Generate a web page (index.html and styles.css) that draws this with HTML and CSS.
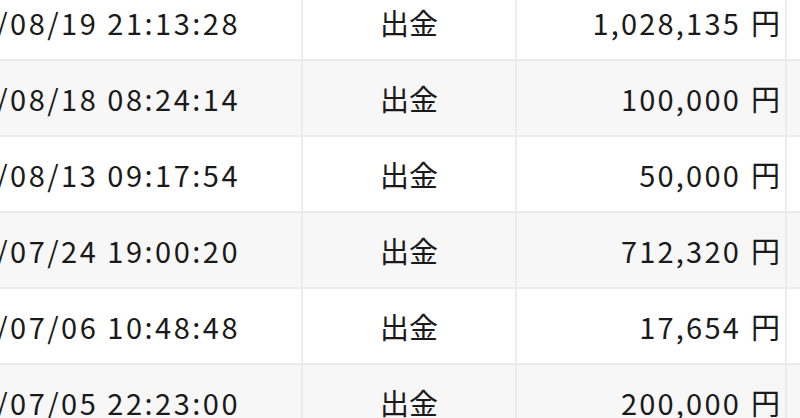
FILE: index.html
```html
<!DOCTYPE html>
<html lang="ja">
<head>
<meta charset="utf-8">
<link rel="stylesheet" href="styles.css">
</head>
<body>
<div class="table">
  <div class="row">
    <div class="cell date"><span class="num">2019/08/19 21:13:28</span></div>
    <div class="cell type">出金</div>
    <div class="cell amount"><span class="num">1,028,135</span><span class="yen">円</span></div>
    <div class="cell extra"></div>
  </div>
  <div class="row alt">
    <div class="cell date"><span class="num">2019/08/18 08:24:14</span></div>
    <div class="cell type">出金</div>
    <div class="cell amount"><span class="num">100,000</span><span class="yen">円</span></div>
    <div class="cell extra"></div>
  </div>
  <div class="row">
    <div class="cell date"><span class="num">2019/08/13 09:17:54</span></div>
    <div class="cell type">出金</div>
    <div class="cell amount"><span class="num">50,000</span><span class="yen">円</span></div>
    <div class="cell extra"></div>
  </div>
  <div class="row alt">
    <div class="cell date"><span class="num">2019/07/24 19:00:20</span></div>
    <div class="cell type">出金</div>
    <div class="cell amount"><span class="num">712,320</span><span class="yen">円</span></div>
    <div class="cell extra"></div>
  </div>
  <div class="row">
    <div class="cell date"><span class="num">2019/07/06 10:48:48</span></div>
    <div class="cell type">出金</div>
    <div class="cell amount"><span class="num">17,654</span><span class="yen">円</span></div>
    <div class="cell extra"></div>
  </div>
  <div class="row alt">
    <div class="cell date"><span class="num">2019/07/05 22:23:00</span></div>
    <div class="cell type">出金</div>
    <div class="cell amount"><span class="num">200,000</span><span class="yen">円</span></div>
    <div class="cell extra"></div>
  </div>
</div>
</body>
</html>
```
FILE: styles.css
```css
html, body {
  margin: 0;
  padding: 0;
  background: #ffffff;
  overflow: hidden;
}
body {
  font-family: "Noto Sans CJK JP", "Noto Sans", sans-serif;
  color: #1a1a1a;
  font-size: 29px;
}
.table {
  margin-top: -15px;
  margin-left: -98px;
  width: 1000px;
}
.row {
  display: grid;
  grid-template-columns: 401px 214px 270px 115px;
  height: 76px;
  box-sizing: border-box;
  border-bottom: 2px solid #ececec;
  background: #ffffff;
}
.row.alt {
  background: #f7f7f7;
}
.cell {
  box-sizing: border-box;
  border-right: 2px solid #ececec;
  display: flex;
  align-items: center;
  white-space: nowrap;
}
.date .num {
  letter-spacing: 2.5px;
}
.amount .num {
  letter-spacing: 2.2px;
}
.date {
  justify-content: flex-end;
  padding-right: 61px;
}
.type {
  justify-content: center;
}
.amount {
  justify-content: flex-end;
  padding-right: 5px;
}
.yen {
  margin-left: 10px;
}
```
